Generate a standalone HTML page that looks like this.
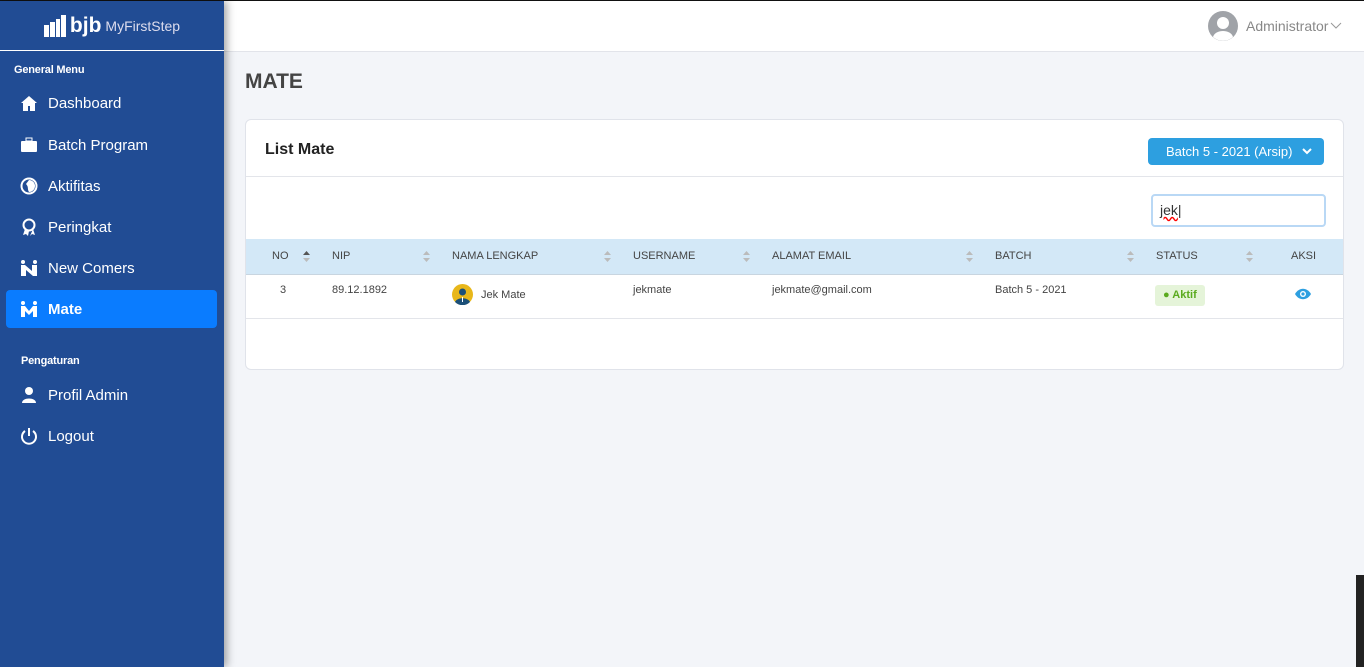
<!DOCTYPE html>
<html><head><style>
*{box-sizing:border-box;margin:0;padding:0}
body{width:1364px;height:667px;overflow:hidden;background:#f3f5f9;font-family:"Liberation Sans",sans-serif;position:relative}
.top{position:absolute;left:0;top:0;width:1364px;height:2px;background:#111}
.side{position:absolute;left:0;top:1px;width:224px;height:666px;background:#214c94;box-shadow:3px 0 8px rgba(0,0,0,.35);color:#fff;z-index:2}
.logo{height:50px;border-bottom:1px solid #fff;display:flex;align-items:center;justify-content:center;gap:4px}
.sec{font-size:11px;font-weight:bold;padding-left:14px;letter-spacing:-.2px}
.item{position:absolute;left:6px;width:211px;height:38px;display:flex;align-items:center;padding-left:14px;font-size:15px}
.item svg{margin-right:10px}
.act{background:#0a7cff;border-radius:4px;font-weight:bold}
.hdr{position:absolute;left:224px;top:1px;right:0;height:51px;background:#fff;border-bottom:1px solid #e2e4ea}
.card{position:absolute;left:245px;top:119px;width:1099px;height:251px;background:#fff;border:1px solid #e0e3ea;border-radius:6px}
.s{position:absolute;width:7px;height:11px}
</style></head><body>
<div class="top"></div>
<div class="side">
 <div class="logo">
  <svg width="22" height="22" viewBox="0 0 22 22"><rect x="0" y="10" width="5" height="12" fill="#fff"/><rect x="6" y="7" width="5" height="15" fill="#fff"/><rect x="12" y="4" width="4" height="18" fill="#fff"/><rect x="17" y="0" width="5" height="22" fill="#fff"/></svg>
  <span style="font-weight:bold;font-size:21px">bjb</span><span style="font-size:14px;color:#dde">MyFirstStep</span>
 </div>
 <div class="sec" style="position:absolute;top:63px">General Menu</div>
 <div class="item" style="top:83px"><svg width="18" height="16"><path d="M9 1L1 8h2v8h5v-5h2v5h5V8h2z" fill="#fff"/></svg>Dashboard</div>
 <div class="item" style="top:125px"><svg width="18" height="16"><rect x="1" y="4" width="16" height="11" rx="1" fill="#fff"/><rect x="6" y="1" width="6" height="3" fill="none" stroke="#fff"/></svg>Batch Program</div>
 <div class="item" style="top:166px"><svg width="18" height="18"><circle cx="9" cy="9" r="7.5" fill="none" stroke="#fff" stroke-width="2"/><path d="M9 3a6 6 0 0 1 0 12c-2-3 0-5-3-8z" fill="#fff"/></svg>Aktifitas</div>
 <div class="item" style="top:207px"><svg width="18" height="18"><circle cx="9" cy="7" r="5.5" fill="none" stroke="#fff" stroke-width="2"/><path d="M5 11l-2 6 3-1 2 2 1-5M13 11l2 6-3-1-2 2" fill="#fff"/></svg>Peringkat</div>
 <div class="item" style="top:248px"><svg width="18" height="16"><circle cx="3" cy="2" r="2" fill="#fff"/><circle cx="15" cy="2" r="2" fill="#fff"/><path d="M1 5h4l7 6V5h5v11h-4L6 10v6H1z" fill="#fff"/></svg>New Comers</div>
 <div class="item act" style="top:289px"><svg width="18" height="16"><circle cx="3" cy="2" r="2" fill="#fff"/><circle cx="15" cy="2" r="2" fill="#fff"/><path d="M1 5h4l4 5 4-5h4v11h-4V10l-4 4-4-4v6H1z" fill="#fff"/></svg>Mate</div>
 <div class="sec" style="position:absolute;top:354px;padding-left:21px">Pengaturan</div>
 <div class="item" style="top:375px"><svg width="18" height="18"><circle cx="9" cy="5" r="4" fill="#fff"/><path d="M2 17c0-6 14-6 14 0z" fill="#fff"/></svg>Profil Admin</div>
 <div class="item" style="top:416px"><svg width="18" height="18"><path d="M5 4a7 7 0 1 0 8 0" fill="none" stroke="#fff" stroke-width="2"/><path d="M9 1v8" stroke="#fff" stroke-width="2"/></svg>Logout</div>
</div>
<div class="hdr">
 <svg style="position:absolute;left:984px;top:10px" width="30" height="30"><circle cx="15" cy="15" r="15" fill="#a0a3a8"/><circle cx="15" cy="12" r="6" fill="#fff"/><path d="M5 26c2-8 18-8 20 0a15 15 0 0 1-20 0z" fill="#fff"/></svg>
 <span style="position:absolute;left:1022px;top:17px;font-size:14px;color:#888">Administrator</span>
 <svg style="position:absolute;left:1106px;top:21px" width="12" height="8"><path d="M1 1l5 5 5-5" stroke="#999" fill="none"/></svg>
</div>
<div style="position:absolute;left:245px;top:70px;font-size:21px;font-weight:bold;color:#444">MATE</div>
<div class="card">
 <div style="position:absolute;left:19px;top:21px;font-size:16px;font-weight:bold;color:#222">List Mate</div>
 <div style="position:absolute;left:902px;top:18px;width:176px;height:27px;background:#2d9fe0;border-radius:4px;color:#fff;font-size:13px;padding:6px 0 0 18px">Batch 5 - 2021 (Arsip) <svg width="10" height="8" style="margin-left:6px"><path d="M1 1l4 4 4-4" stroke="#fff" stroke-width="2" fill="none"/></svg></div>
 <div style="position:absolute;left:0;right:0;top:56px;border-top:1px solid #e3e5ea"></div>
 <div style="position:absolute;left:905px;top:74px;width:175px;height:33px;border:2px solid #b9d8f5;border-radius:4px;font-size:14px;padding:6px 7px;color:#333"><span style="text-decoration:underline wavy red">jek</span>|</div>
 <div style="position:absolute;left:0;right:0;top:119px;height:36px;background:#d3e8f7;border-bottom:1px solid #c8d5e0"></div>
 <div style="position:absolute;left:0;right:0;top:198px;border-top:1px solid #e3e5ea"></div>
 <div style="font-size:11px;color:#444">
  <span style="position:absolute;left:26px;top:130px">NO</span><span style="position:absolute;left:86px;top:130px">NIP</span><span style="position:absolute;left:206px;top:130px">NAMA LENGKAP</span><span style="position:absolute;left:387px;top:130px">USERNAME</span><span style="position:absolute;left:526px;top:130px">ALAMAT EMAIL</span><span style="position:absolute;left:749px;top:130px">BATCH</span><span style="position:absolute;left:910px;top:130px">STATUS</span><span style="position:absolute;left:1045px;top:130px">AKSI</span>
  <svg class="s" style="left:57px;top:131px"><path d="M0 4L3.5 0 7 4z" fill="#555"/><path d="M0 7l3.5 4L7 7z" fill="#bbb"/></svg>
  <svg class="s" style="left:177px;top:131px"><path d="M0 4L3.5 0 7 4zM0 7l3.5 4L7 7z" fill="#bbb"/></svg>
  <svg class="s" style="left:358px;top:131px"><path d="M0 4L3.5 0 7 4zM0 7l3.5 4L7 7z" fill="#bbb"/></svg>
  <svg class="s" style="left:497px;top:131px"><path d="M0 4L3.5 0 7 4zM0 7l3.5 4L7 7z" fill="#bbb"/></svg>
  <svg class="s" style="left:720px;top:131px"><path d="M0 4L3.5 0 7 4zM0 7l3.5 4L7 7z" fill="#bbb"/></svg>
  <svg class="s" style="left:881px;top:131px"><path d="M0 4L3.5 0 7 4zM0 7l3.5 4L7 7z" fill="#bbb"/></svg>
  <svg class="s" style="left:1000px;top:131px"><path d="M0 4L3.5 0 7 4zM0 7l3.5 4L7 7z" fill="#bbb"/></svg>
  <span style="position:absolute;left:34px;top:164px">3</span><span style="position:absolute;left:86px;top:164px">89.12.1892</span>
  <svg style="position:absolute;left:206px;top:164px" width="21" height="21"><circle cx="10.5" cy="10.5" r="10.5" fill="#e8b71a"/><path d="M3 18c2-5 13-5 15 0a10.5 10.5 0 0 1-15 0z" fill="#1b4f78"/><circle cx="10.5" cy="8" r="3.5" fill="#1b4f78"/><rect x="10" y="13" width="1" height="5" fill="#fff"/></svg>
  <span style="position:absolute;left:235px;top:169px">Jek Mate</span>
  <span style="position:absolute;left:387px;top:164px">jekmate</span><span style="position:absolute;left:526px;top:164px">jekmate@gmail.com</span><span style="position:absolute;left:749px;top:164px">Batch 5 - 2021</span>
  <span style="position:absolute;left:909px;top:165px;width:50px;height:21px;background:#e5f4d9;border-radius:3px;color:#5aaa1e;font-weight:bold;padding:4px 0 0 8px">● Aktif</span>
  <svg style="position:absolute;left:1048px;top:168px" width="18" height="12"><path d="M1 6c4-7 12-7 16 0-4 7-12 7-16 0z" fill="#2d9fe0"/><circle cx="9" cy="6" r="3" fill="#fff"/><circle cx="9" cy="6" r="1.6" fill="#2d9fe0"/></svg>
 </div>
</div>
<div style="position:absolute;left:1356px;top:575px;width:8px;height:92px;background:#222"></div>
</body></html>
